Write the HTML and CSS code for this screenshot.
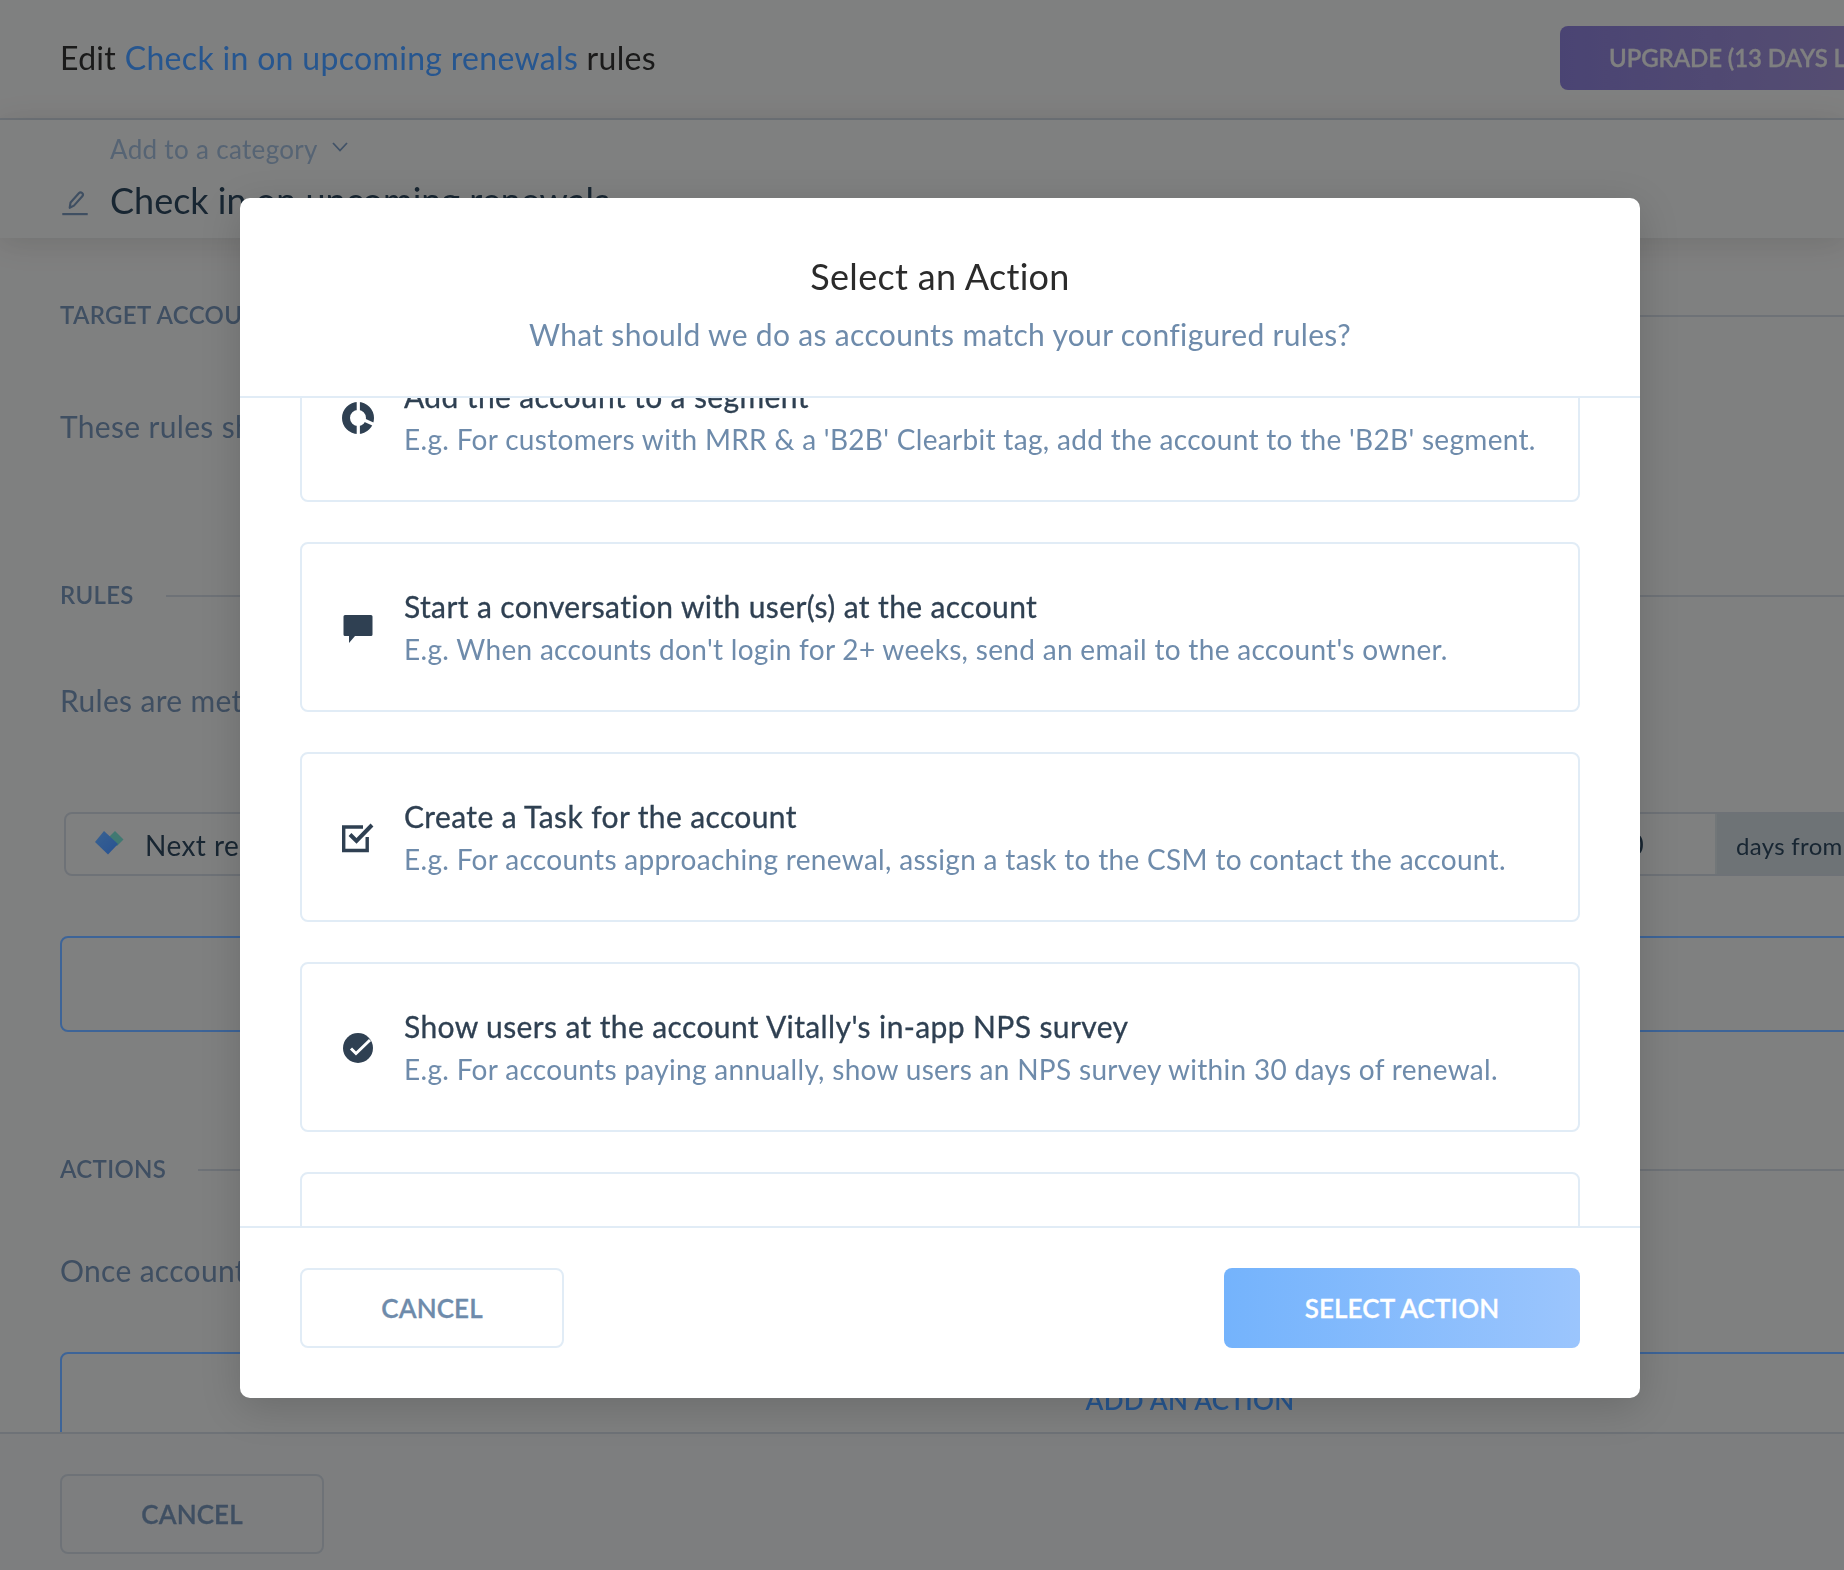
FILE: index.html
```html
<!DOCTYPE html>
<html lang="en">
<head>
<meta charset="utf-8">
<title>Edit rules</title>
<link rel="stylesheet" href="styles.css">
</head>
<body>
<div class="page">
  <header class="topbar">
    <h1 class="topbar-title">Edit <a class="link">Check in on upcoming renewals</a> rules</h1>
    <button class="upgrade">UPGRADE (13 DAYS LEFT)</button>
  </header>
  <div class="subhead">
    <div class="category">Add to a category
      <svg class="chevron" width="18" height="12" viewBox="0 0 18 12"><path d="M2 2l7 7.500L16 2" fill="none" stroke="currentColor" stroke-width="1.800"/></svg>
    </div>
    <div class="name-row">
      <svg class="pencil" width="26" height="24" viewBox="0 0 26 24"><path d="M8 16.500l.8-5L16.600 2.800c.9-1 2.200-1 3.100-.2.900.8 1 2.100.2 3L12 14.500z" fill="none" stroke="currentColor" stroke-width="2" stroke-linejoin="round"/><path d="M1 22.500h24" stroke="currentColor" stroke-width="2.200"/></svg>
      <span class="name">Check in on upcoming renewals</span>
    </div>
  </div>
  <main class="main">
    <div class="section-head section-target"><span>TARGET ACCOUNTS</span><i class="rule"></i></div>
    <p class="copy copy-target">These rules should apply to</p>
    <div class="section-head section-rules"><span>RULES</span><i class="rule"></i></div>
    <p class="copy copy-rules">Rules are met when</p>
    <div class="filter">
      <div class="filter-field">
        <div class="filter-name">
          <svg class="gem" width="30" height="26" viewBox="0 0 30 26"><defs><linearGradient id="gemblue" x1="0" y1="0" x2="1" y2="1"><stop offset="0" stop-color="#90bff5"/><stop offset="1" stop-color="#6fa0ea"/></linearGradient></defs><path d="M21 1l8.500 8.500-6.500 6.500-8.500-8.500z" fill="#a8e8e0"/><path d="M10 1l14 13-10 10.500L1 12z" fill="url(#gemblue)"/></svg>
          Next renewal
        </div>
        <span class="filter-value">30</span>
      </div>
      <div class="filter-addon">days from today</div>
    </div>
    <div class="add-box"></div>
    <div class="section-head section-actions"><span>ACTIONS</span><i class="rule"></i></div>
    <p class="copy copy-actions">Once accounts match these rules</p>
    <div class="add-box add-action">ADD AN ACTION</div>
  </main>
  <footer class="bottombar">
    <button class="btn btn-ghost">CANCEL</button>
  </footer>
</div>

<div class="overlay">
  <section class="modal">
    <header class="modal-head">
      <h2 class="modal-title">Select an Action</h2>
      <p class="modal-sub">What should we do as accounts match your configured rules?</p>
    </header>
    <div class="modal-body">
      <ul class="options">
        <li class="option">
          <svg class="option-icon" width="32" height="32" viewBox="0 0 32 32"><circle cx="16" cy="16" r="12" fill="none" stroke="#2f4052" stroke-width="8"/><path d="M16.300 0v9M16.300 23v9M21 17.500l11 5" stroke="#fff" stroke-width="3.200" fill="none"/></svg>
          <div><h3 class="option-title">Add the account to a segment</h3><p class="option-desc">E.g. For customers with MRR &amp; a 'B2B' Clearbit tag, add the account to the 'B2B' segment.</p></div>
        </li>
        <li class="option">
          <svg class="option-icon" width="32" height="32" viewBox="0 0 32 32"><path d="M3 3h26a1.500 1.500 0 0 1 1.500 1.500v18a1.500 1.500 0 0 1-1.500 1.500H13l-6 7v-7H3a1.500 1.500 0 0 1-1.500-1.500v-18A1.500 1.500 0 0 1 3 3z" fill="#2f4052"/></svg>
          <div><h3 class="option-title">Start a conversation with user(s) at the account</h3><p class="option-desc">E.g. When accounts don't login for 2+ weeks, send an email to the account's owner.</p></div>
        </li>
        <li class="option">
          <svg class="option-icon" width="32" height="32" viewBox="0 0 32 32"><path d="M21 5H1.700v23.500h23.500V15" fill="none" stroke="#2f4052" stroke-width="3.400"/><path d="M8 12.500l6.500 6.500L30 3" fill="none" stroke="#fff" stroke-width="7.500"/><path d="M8 12.500l6.500 6.500L30 3" fill="none" stroke="#2f4052" stroke-width="4"/></svg>
          <div><h3 class="option-title">Create a Task for the account</h3><p class="option-desc">E.g. For accounts approaching renewal, assign a task to the CSM to contact the account.</p></div>
        </li>
        <li class="option">
          <svg class="option-icon" width="32" height="32" viewBox="0 0 32 32"><circle cx="16" cy="16" r="15" fill="#2f4052"/><path d="M9 16.500l5 5L28 8" fill="none" stroke="#fff" stroke-width="3"/></svg>
          <div><h3 class="option-title">Show users at the account Vitally's in-app NPS survey</h3><p class="option-desc">E.g. For accounts paying annually, show users an NPS survey within 30 days of renewal.</p></div>
        </li>
        <li class="option option-clipped">
          <svg class="option-icon" width="32" height="32" viewBox="0 0 32 32"></svg>
          <div><h3 class="option-title">Push a message into your Slack</h3><p class="option-desc">E.g. When renewal is near, message your team.</p></div>
        </li>
      </ul>
    </div>
    <footer class="modal-foot">
      <button class="btn btn-plain">CANCEL</button>
      <button class="btn btn-primary">SELECT ACTION</button>
    </footer>
  </section>
</div>
</body>
</html>
```

FILE: styles.css
```css
* { box-sizing: border-box; }
html, body { margin: 0; height: 100%; overflow: hidden; }
body { font-family: Lato, "Open Sans", sans-serif; color: #34495e; background: #fff; letter-spacing: .32px; }
h1, h2, h3, p, ul { margin: 0; padding: 0; font-weight: 400; }
button { font: inherit; letter-spacing: inherit; border: 0; cursor: pointer; }

.page { width: 1844px; height: 1570px; display: flex; flex-direction: column; overflow: hidden; }

.topbar { flex: none; height: 120px; border-bottom: 2px solid #dfe4ea; display: flex; align-items: center; padding: 0 0 2px 60px; position: relative; }
.topbar-title { font-size: 32px; color: #333; line-height: 40px; white-space: nowrap; }
.link { color: #70a6e8; }
.upgrade { flex: none; margin-left: 904px; width: 420px; height: 64px; border-radius: 8px; padding: 0 0 2px 49px; text-align: left; font-size: 24px; font-weight: 600; letter-spacing: -.1px; -webkit-text-stroke: .3px #fff; color: #fff; white-space: nowrap; background: linear-gradient(90deg, #938cc2, #b0a6ca); }

.subhead { flex: none; height: 118px; padding-left: 60px; box-shadow: 0 4px 30px rgba(0,0,0,.12); position: relative; }
.category { margin-left: 50px; padding-top: 10px; font-size: 26px; line-height: 38px; color: #b6c6d8; display: flex; align-items: center; gap: 13px; }
.chevron { color: #8fa3bb; margin-top: -4px; }
.name-row { display: flex; align-items: center; gap: 22px; margin-top: 8px; height: 48px; padding-left: 2px; }
.pencil { color: #8a9cb2; margin-top: 5px; flex: none; transform: scale(1.06); }
.name { font-size: 36px; line-height: 48px; color: #3a4a58; white-space: nowrap; letter-spacing: 0; }

.main { flex: 1; min-height: 0; overflow: hidden; padding: 62px 0 0 60px; width: 2320px; }
.section-head { display: flex; align-items: center; gap: 32px; font-size: 24px; line-height: 30px; color: #8a9cb2; font-weight: 600; }
.rule { flex: 1; height: 2px; background: #dfe4ea; margin-top: 2px; }
.section-rules { margin-top: 134px; }
.section-actions { margin-top: 122px; }
.copy { font-size: 30px; line-height: 40px; color: #8a9cb2; white-space: nowrap; }
.copy-target { margin-top: 76px; }
.copy-rules { margin-top: 70px; }
.copy-actions { margin-top: 66px; }

.filter { margin: 92px 0 0 4px; height: 64px; display: flex; border: 2px solid #dfe4ea; border-radius: 8px; }
.filter-field { flex: none; width: 1649px; display: flex; align-items: center; justify-content: space-between; padding: 0 71px 0 28px; }
.filter-name { display: flex; align-items: center; gap: 21px; font-size: 28px; letter-spacing: .45px; color: #3a4a58; padding-top: 2px; }
.gem { margin-top: -4px; }
.filter-value { font-size: 28px; color: #3a4a58; }
.filter-addon { flex: 1; background: #dfe5e9; border-left: 2px solid #e8edf0; padding: 2px 0 0 19px; display: flex; align-items: center; font-size: 24px; color: #3a4a58; }

.add-box { height: 96px; margin-top: 60px; border: 2px solid #98c4ff; border-radius: 8px; display: flex; align-items: center; justify-content: center; font-size: 26px; font-weight: 600; color: #70a6e8; }
.add-action { margin-top: 62px; }

.bottombar { flex: none; height: 138px; background: #fbfcfd; border-top: 2px solid #dfe4ea; padding: 40px 0 0 60px; }
.btn { height: 80px; border-radius: 8px; font-size: 26px; font-weight: 600; letter-spacing: .1px; }
.btn-ghost { width: 264px; height: 80px; background: transparent; border: 2px solid #dfe4ea; color: #8a9cb2; -webkit-text-stroke: .3px #8a9cb2; }

.overlay { position: fixed; inset: 0; backdrop-filter: brightness(.5) saturate(1.75); padding: 198px 0 0 240px; }
.modal { width: 1400px; height: 1200px; background: #fff; border-radius: 10px; box-shadow: 0 10px 40px rgba(0,0,0,.16); display: flex; flex-direction: column; overflow: hidden; }
.modal-head { flex: none; height: 200px; border-bottom: 2px solid #e1ecf6; padding-top: 55px; text-align: center; }
.modal-title { font-size: 36px; line-height: 46px; color: #2b2b2b; }
.modal-sub { margin-top: 15px; font-size: 30px; line-height: 40px; color: #6e8bab; }
.modal-body { flex: 1; min-height: 0; overflow: hidden; padding: 0 60px; }
.options { list-style: none; margin-top: -66px; display: flex; flex-direction: column; gap: 40px; }
.option { flex: none; height: 170px; border: 2px solid #e1ecf6; border-radius: 8px; display: flex; align-items: center; gap: 30px; padding-left: 40px; }
.option-clipped { padding-top: 6px; }
.option-icon { flex: none; margin-top: 2px; }
.option-title { font-size: 30px; line-height: 40px; color: #2f4052; white-space: nowrap; letter-spacing: .38px; -webkit-text-stroke: .3px #2f4052; }
.option-desc { margin-top: 3px; font-size: 28px; line-height: 40px; color: #6e8bab; white-space: nowrap; letter-spacing: .31px; }
.modal-foot { flex: none; height: 172px; border-top: 2px solid #e1ecf6; padding: 40px 60px 0; display: flex; justify-content: space-between; align-items: flex-start; }
.btn-plain { width: 264px; background: #fff; border: 2px solid #e1ecf6; color: #6e8bab; -webkit-text-stroke: .3px #6e8bab; }
.btn-primary { width: 356px; color: #fff; background: linear-gradient(90deg, #74b3fc, #9bc5fd); -webkit-text-stroke: .3px #fff; }
```
